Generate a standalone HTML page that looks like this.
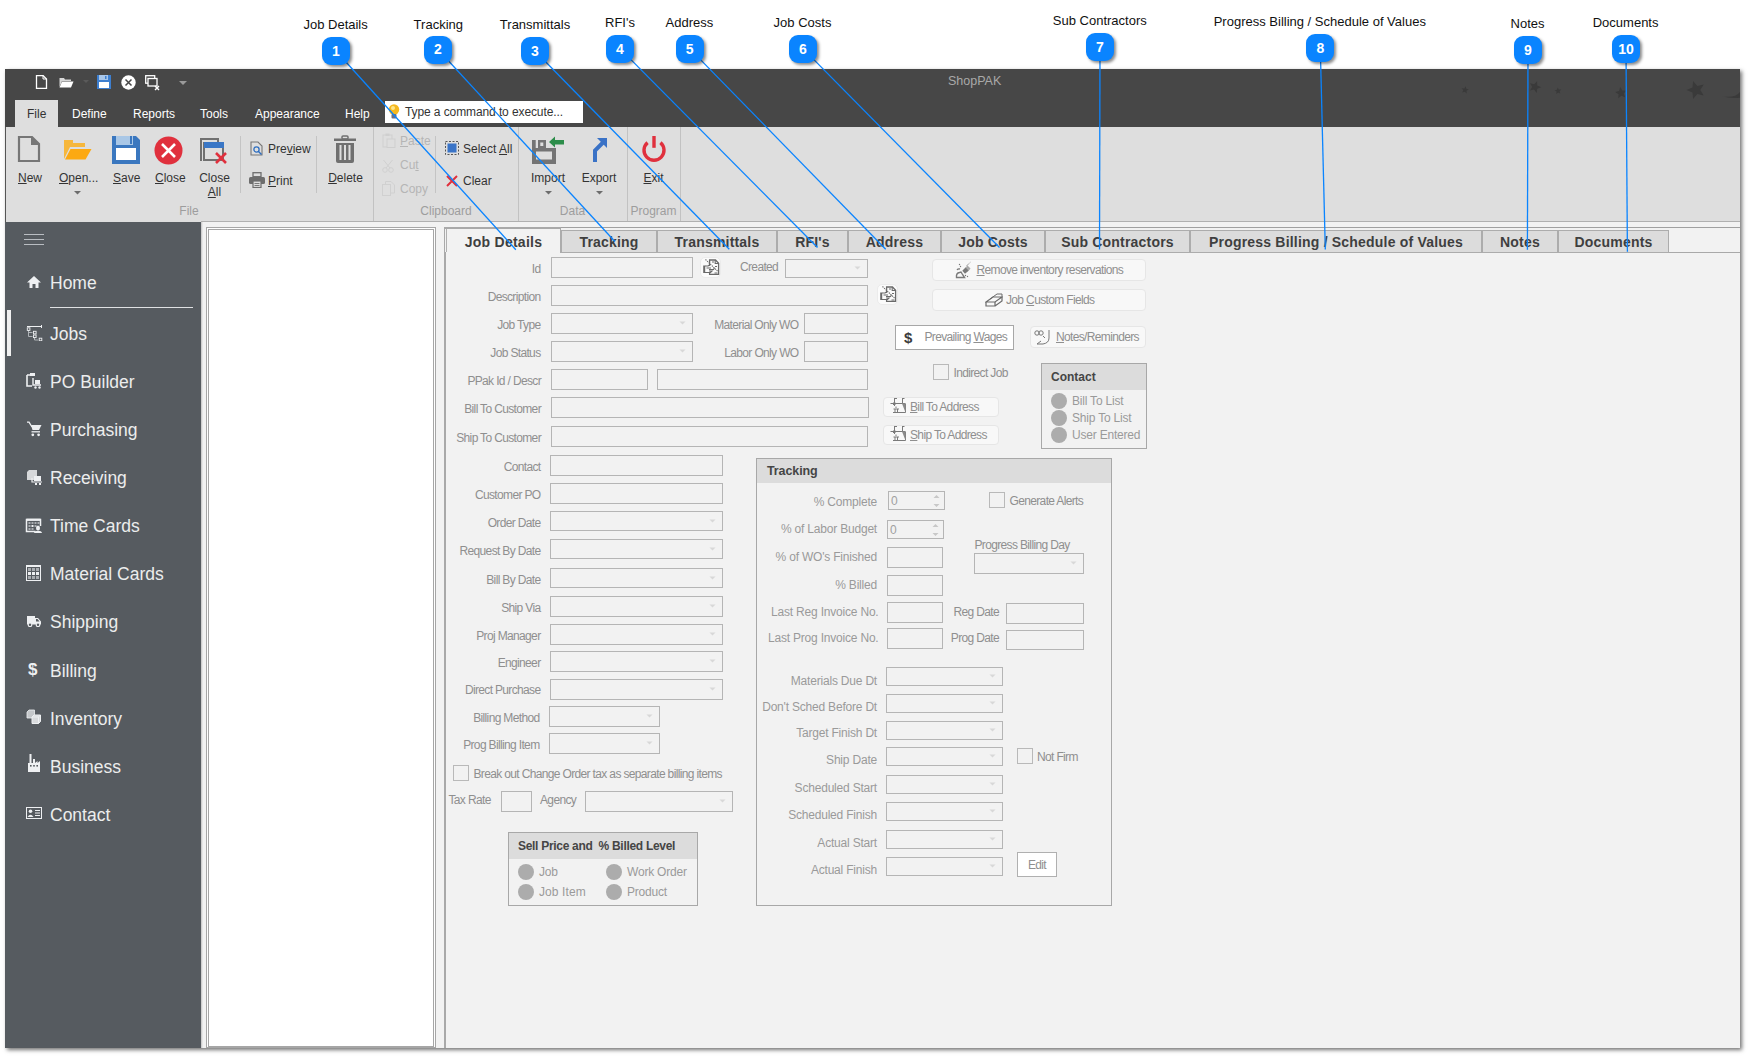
<!DOCTYPE html>
<html><head><meta charset="utf-8"><style>
html,body{margin:0;padding:0;}
body{width:1749px;height:1058px;position:relative;overflow:hidden;background:#fff;font-family:"Liberation Sans", sans-serif;}
.t{position:absolute;white-space:nowrap;}
.r{position:absolute;}
u{text-decoration:underline;text-underline-offset:1px;text-decoration-thickness:1px;}
</style></head><body>
<div class="r" style="left:5px;top:69px;width:1735px;height:979px;background:#f2f2f2;box-shadow:2px 2px 4px rgba(0,0,0,0.55);"></div><div class="r" style="left:5px;top:69px;width:1735px;height:58px;background:#474747;"></div><div class="r" style="left:5px;top:127px;width:1735px;height:95px;background:#dedede;"></div><div class="r" style="left:5px;top:127px;width:1px;height:95px;background:#555;"></div><div class="r" style="left:201px;top:221px;width:1539px;height:2px;background:#b0b0b0;"></div><div class="r" style="left:5px;top:222px;width:196px;height:826px;background:#565b60;"></div><div class="r" style="left:201px;top:222px;width:243px;height:826px;background:#f2f2f2;"></div><div class="r" style="left:206px;top:227px;width:230px;height:821px;background:#fff;border:1px solid #a6a6a6;box-sizing:border-box;"></div><div class="r" style="left:208px;top:229px;width:226px;height:818px;border:1px solid #a6a6a6;box-sizing:border-box;"></div><div class="r" style="left:201px;top:222px;width:2px;height:826px;background:linear-gradient(to right, rgba(0,0,0,0.2), rgba(0,0,0,0));"></div><div class="r" style="left:444px;top:222px;width:1296px;height:826px;background:#f2f2f2;"></div><div class="r" style="left:444px;top:227px;width:1296px;height:1px;background:#a0a0a0;"></div><div class="r" style="left:444px;top:227px;width:1px;height:821px;background:#a0a0a0;"></div><div class="t" style="left:948px;top:75.42px;font-size:12.5px;line-height:12.5px;color:#a9a9a9;font-weight:normal;">ShopPAK</div><svg class="r" style="left:1440px;top:70px;" width="300" height="40" viewBox="0 0 300 40"><polygon points="25.7,16.3 26.2,18.8 28.8,19.5 26.5,20.8 26.7,23.4 24.7,21.7 22.3,22.6 23.3,20.2 21.6,18.2 24.3,18.5" fill="#3a3a3a"/><polygon points="97.1,11.2 97.3,15.4 101.2,17.2 97.2,18.7 96.7,23.0 94.0,19.6 89.9,20.5 92.2,16.9 90.1,13.2 94.2,14.3" fill="#3a3a3a"/><polygon points="117.7,17.5 118.8,19.6 121.2,19.6 119.5,21.4 120.3,23.6 118.1,22.6 116.2,24.0 116.6,21.6 114.6,20.2 117.0,19.8" fill="#3a3a3a"/><polygon points="180.2,17.1 182.3,20.6 186.4,20.4 183.7,23.5 185.2,27.3 181.4,25.7 178.2,28.3 178.6,24.2 175.1,22.0 179.1,21.1" fill="#3a3a3a"/><polygon points="253.1,11.0 257.3,15.9 263.7,14.4 260.3,20.0 263.7,25.6 257.3,24.1 253.1,29.0 252.5,22.5 246.5,20.0 252.5,17.5" fill="#3a3a3a"/><path d="M282,26.3 Q295,28.5 300,22 V27.8 Q290,28.8 282,26.3 Z" fill="#3a3a3a"/></svg><svg class="r" style="left:35px;top:75px;" width="13" height="14" viewBox="0 0 13 14"><path d="M1.5,0.5 H8 L11.5,4 V13.5 H1.5 Z" fill="none" stroke="#fff" stroke-width="1.3"/><path d="M8,0.5 V4 H11.5" fill="none" stroke="#fff" stroke-width="1"/></svg><svg class="r" style="left:59px;top:77px;" width="15" height="11" viewBox="0 0 15 11"><path d="M0.5,1 H5 L6,2.5 H12 V4 H3 L0.5,10 Z" fill="#d8d8d8"/><path d="M3,4.5 H14.5 L12,10.5 H0.5 Z" fill="#fff"/></svg><svg class="r" style="left:83px;top:80px;" width="6" height="4" viewBox="0 0 6 4"><path d="M0,0 H6 L3,3 Z" fill="#5a5a5a"/></svg><svg class="r" style="left:97px;top:75px;" width="14" height="14" viewBox="0 0 14 14"><rect x="0" y="0" width="14" height="14" fill="#3d7fd0"/><rect x="2" y="0" width="9" height="5" fill="#a9c7ea"/><rect x="8" y="1" width="1.5" height="3" fill="#3d7fd0"/><rect x="2" y="7" width="10" height="6" fill="#fff"/></svg><svg class="r" style="left:121px;top:75px;" width="15" height="15" viewBox="0 0 15 15"><circle cx="7.5" cy="7.5" r="7.2" fill="#fff"/><path d="M4.5,4.5 L10.5,10.5 M10.5,4.5 L4.5,10.5" stroke="#474747" stroke-width="1.5"/></svg><svg class="r" style="left:145px;top:75px;" width="15" height="16" viewBox="0 0 15 16"><rect x="0.7" y="0.7" width="9" height="7.5" fill="none" stroke="#fff" stroke-width="1.3"/><rect x="3" y="3.5" width="9" height="7.5" fill="#474747" stroke="#fff" stroke-width="1.3"/><path d="M10,11 L14,15 M14,11 L10,15" stroke="#fff" stroke-width="1.4"/></svg><svg class="r" style="left:179px;top:81px;" width="8" height="5" viewBox="0 0 8 5"><path d="M0,0 H8 L4,4 Z" fill="#9a9a9a"/></svg><div class="r" style="left:15px;top:100px;width:43px;height:27px;background:#dedede;"></div><div class="t" style="left:27px;top:108.34px;font-size:12px;line-height:12px;color:#333;font-weight:normal;">File</div><div class="t" style="left:72px;top:108.34px;font-size:12px;line-height:12px;color:#fff;font-weight:normal;">Define</div><div class="t" style="left:133px;top:108.34px;font-size:12px;line-height:12px;color:#fff;font-weight:normal;">Reports</div><div class="t" style="left:200px;top:108.34px;font-size:12px;line-height:12px;color:#fff;font-weight:normal;">Tools</div><div class="t" style="left:255px;top:108.34px;font-size:12px;line-height:12px;color:#fff;font-weight:normal;">Appearance</div><div class="t" style="left:345px;top:108.34px;font-size:12px;line-height:12px;color:#fff;font-weight:normal;">Help</div><div class="r" style="left:385px;top:101px;width:198px;height:22px;background:#fff;"></div><svg class="r" style="left:388px;top:103px;" width="12" height="18" viewBox="0 0 12 18"><circle cx="6" cy="6.5" r="5.2" fill="#f5b81f"/><circle cx="5" cy="5" r="2" fill="#fde58a"/><rect x="3.5" y="11" width="5" height="4.5" rx="1" fill="#6a6f86"/></svg><div class="t" style="left:405px;top:105.84px;font-size:12px;line-height:12px;color:#333;font-weight:normal;letter-spacing:-0.1px;">Type a command to execute...</div><svg class="r" style="left:17px;top:135px;" width="24" height="28" viewBox="0 0 24 28"><path d="M2,2 H15 L22,9 V26 H2 Z" fill="none" stroke="#767676" stroke-width="2.2"/><path d="M14,1 L23,10 H14 Z" fill="#767676"/></svg><div class="t" style="left:18px;top:171.84px;font-size:12px;line-height:12px;color:#333;font-weight:normal;"><u>N</u>ew</div><svg class="r" style="left:63px;top:139px;" width="30" height="23" viewBox="0 0 30 23"><path d="M1,1 H10 V4 H22 V8 H7 L1,20 Z" fill="#f6b73c"/><path d="M7.5,10 H28.5 L22.5,20.5 H2 Z" fill="#fca912"/></svg><div class="t" style="left:59px;top:171.84px;font-size:12px;line-height:12px;color:#333;font-weight:normal;"><u>O</u>pen...</div><svg class="r" style="left:74px;top:191px;" width="7" height="4" viewBox="0 0 7 4"><path d="M0,0 H7 L3.5,3.5 Z" fill="#6d6d6d"/></svg><svg class="r" style="left:112px;top:136px;" width="28" height="28" viewBox="0 0 28 28"><path d="M0,0 H24 L28,4 V28 H0 Z" fill="#3a77bf"/><rect x="4" y="0" width="17" height="9" fill="#a9c7e6"/><rect x="18" y="0" width="2" height="8" fill="#3a77bf"/><rect x="4" y="12" width="20" height="12" fill="#fff"/></svg><div class="t" style="left:113px;top:171.84px;font-size:12px;line-height:12px;color:#333;font-weight:normal;"><u>S</u>ave</div><svg class="r" style="left:154px;top:136px;" width="29" height="29" viewBox="0 0 29 29"><circle cx="14.5" cy="14.5" r="14" fill="#e0303d"/><path d="M8,8 L21,21 M21,8 L8,21" stroke="#fff" stroke-width="2.6"/></svg><div class="t" style="left:155px;top:171.84px;font-size:12px;line-height:12px;color:#333;font-weight:normal;"><u>C</u>lose</div><svg class="r" style="left:199px;top:137px;" width="30" height="30" viewBox="0 0 30 30"><path d="M2,24 V2 H19 V6" fill="none" stroke="#707070" stroke-width="2"/><rect x="5" y="6" width="19" height="17" fill="none" stroke="#707070" stroke-width="2"/><rect x="5" y="5" width="20" height="6" fill="#3a77c6"/><path d="M17,16 L27,26 M27,16 L17,26" stroke="#e0303d" stroke-width="2.6"/></svg><div class="t" style="left:-85.5px;width:600px;text-align:center;top:171.84px;font-size:12px;line-height:12px;color:#333;font-weight:normal;">Close</div><div class="t" style="left:-85.5px;width:600px;text-align:center;top:185.84px;font-size:12px;line-height:12px;color:#333;font-weight:normal;"><u>A</u>ll</div><div class="r" style="left:240px;top:136px;width:1px;height:57px;background:#c4c4c4;"></div><svg class="r" style="left:250px;top:141px;" width="14" height="16" viewBox="0 0 14 16"><path d="M1,1 H8 L12,5 V14 H1 Z" fill="none" stroke="#777" stroke-width="1.1"/><circle cx="6.5" cy="8.5" r="2.6" fill="none" stroke="#2f6fc0" stroke-width="1.3"/><path d="M8.5,10.5 L11.5,13.5" stroke="#2f6fc0" stroke-width="1.4"/></svg><div class="t" style="left:268px;top:142.84px;font-size:12px;line-height:12px;color:#333;font-weight:normal;">Pre<u>v</u>iew</div><svg class="r" style="left:249px;top:172px;" width="16" height="16" viewBox="0 0 16 16"><rect x="4" y="0.7" width="8" height="4" fill="none" stroke="#6d6d6d" stroke-width="1.3"/><rect x="0" y="5" width="16" height="7" rx="1.5" fill="#6d6d6d"/><rect x="4" y="9" width="8" height="6.5" fill="#dedede" stroke="#6d6d6d" stroke-width="1.2"/><path d="M5.5,11.5 H10.5 M5.5,13.5 H10.5" stroke="#6d6d6d" stroke-width="0.9"/></svg><div class="t" style="left:268px;top:174.84px;font-size:12px;line-height:12px;color:#333;font-weight:normal;"><u>P</u>rint</div><div class="r" style="left:316px;top:136px;width:1px;height:57px;background:#c4c4c4;"></div><svg class="r" style="left:333px;top:135px;" width="24" height="30" viewBox="0 0 24 30"><rect x="9" y="1" width="6" height="3" rx="1" fill="none" stroke="#707070" stroke-width="1.5"/><rect x="1" y="3.5" width="22" height="2.5" fill="#707070"/><path d="M3,8 H21 V26 Q21,28 19,28 H5 Q3,28 3,26 Z" fill="#707070"/><rect x="6.5" y="10" width="2" height="15" fill="#dedede"/><rect x="11" y="10" width="2" height="15" fill="#dedede"/><rect x="15.5" y="10" width="2" height="15" fill="#dedede"/></svg><div class="t" style="left:45.5px;width:600px;text-align:center;top:171.84px;font-size:12px;line-height:12px;color:#333;font-weight:normal;"><u>D</u>elete</div><div class="t" style="left:-111px;width:600px;text-align:center;top:204.84px;font-size:12px;line-height:12px;color:#9d9d9d;font-weight:normal;">File</div><div class="r" style="left:373px;top:127px;width:1px;height:94px;background:#c2c2c2;"></div><svg class="r" style="left:382px;top:133px;" width="14" height="15" viewBox="0 0 14 15"><rect x="1" y="2" width="9" height="12" fill="none" stroke="#cfcfcf" stroke-width="1"/><rect x="5" y="6" width="8" height="8.5" fill="#dedede" stroke="#cfcfcf" stroke-width="1"/><rect x="3.5" y="0.5" width="4" height="2.5" fill="#cfcfcf"/></svg><div class="t" style="left:400px;top:135.34px;font-size:12px;line-height:12px;color:#b5b5b5;font-weight:normal;"><u>P</u>aste</div><svg class="r" style="left:382px;top:159px;" width="12" height="14" viewBox="0 0 12 14"><circle cx="3" cy="11" r="2.3" fill="none" stroke="#d0d0d0" stroke-width="1"/><circle cx="9" cy="11" r="2.3" fill="none" stroke="#d0d0d0" stroke-width="1"/><path d="M1.5,1 L8,9 M10.5,1 L4,9" stroke="#d0d0d0" stroke-width="1"/></svg><div class="t" style="left:400px;top:159.34px;font-size:12px;line-height:12px;color:#b5b5b5;font-weight:normal;">Cu<u>t</u></div><svg class="r" style="left:382px;top:181px;" width="13" height="15" viewBox="0 0 13 15"><rect x="0.5" y="3.5" width="8" height="11" fill="none" stroke="#d0d0d0" stroke-width="1"/><path d="M3.5,3.5 V0.5 H9 L12.5,4 V12 H8.5" fill="none" stroke="#d0d0d0" stroke-width="1"/></svg><div class="t" style="left:400px;top:183.34px;font-size:12px;line-height:12px;color:#b5b5b5;font-weight:normal;">Copy</div><div class="r" style="left:435px;top:136px;width:1px;height:57px;background:#c4c4c4;"></div><svg class="r" style="left:445px;top:141px;" width="14" height="14" viewBox="0 0 14 14"><rect x="0.5" y="0.5" width="13" height="13" fill="none" stroke="#555" stroke-width="1" stroke-dasharray="2,1.5"/><rect x="2.5" y="2.5" width="9" height="9" fill="#3a74c7"/></svg><div class="t" style="left:463px;top:142.84px;font-size:12px;line-height:12px;color:#333;font-weight:normal;">Select <u>A</u>ll</div><svg class="r" style="left:446px;top:175px;" width="12" height="12" viewBox="0 0 12 12"><path d="M1,1 L11,11 M11,1 L1,11" stroke="#e0303d" stroke-width="2"/></svg><div class="t" style="left:463px;top:174.84px;font-size:12px;line-height:12px;color:#333;font-weight:normal;">Clear</div><div class="t" style="left:146px;width:600px;text-align:center;top:205.34px;font-size:12px;line-height:12px;color:#9d9d9d;font-weight:normal;">Clipboard</div><div class="r" style="left:518px;top:127px;width:1px;height:94px;background:#c2c2c2;"></div><svg class="r" style="left:531px;top:136px;" width="35" height="29" viewBox="0 0 35 29"><rect x="1" y="4" width="3.7" height="24" fill="#747474"/><rect x="7" y="4" width="8" height="8" fill="#747474"/><path d="M1,12 H25 V28 H1 Z M5,15.5 V23.5 H21 V15.5 Z" fill="#747474" fill-rule="evenodd"/><rect x="9.3" y="6.5" width="3" height="3.5" fill="#dedede"/><path d="M18,6 L24,0.5 V4 H33 V8.5 H24 V11.5 Z" fill="#2c8d4a"/></svg><div class="t" style="left:248px;width:600px;text-align:center;top:171.84px;font-size:12px;line-height:12px;color:#333;font-weight:normal;">Import</div><svg class="r" style="left:545px;top:191px;" width="7" height="4" viewBox="0 0 7 4"><path d="M0,0 H7 L3.5,3.5 Z" fill="#6d6d6d"/></svg><svg class="r" style="left:592px;top:137px;" width="16" height="26" viewBox="0 0 16 26"><path d="M3,25 V13.5 L11,5.5" fill="none" stroke="#3a72c6" stroke-width="4" stroke-linejoin="miter"/><path d="M5,1 H15 V11 Z" fill="#3a72c6"/></svg><div class="t" style="left:299px;width:600px;text-align:center;top:171.84px;font-size:12px;line-height:12px;color:#333;font-weight:normal;">Export</div><svg class="r" style="left:596px;top:191px;" width="7" height="4" viewBox="0 0 7 4"><path d="M0,0 H7 L3.5,3.5 Z" fill="#6d6d6d"/></svg><div class="t" style="left:272.5px;width:600px;text-align:center;top:205.34px;font-size:12px;line-height:12px;color:#9d9d9d;font-weight:normal;">Data</div><div class="r" style="left:627px;top:127px;width:1px;height:94px;background:#c2c2c2;"></div><svg class="r" style="left:641px;top:136px;" width="26" height="28" viewBox="0 0 26 28"><path d="M6.57,6.64 A10,10 0 1 0 19.43,6.64" fill="none" stroke="#e0303d" stroke-width="3.4"/><rect x="11.3" y="0" width="3.4" height="11.8" fill="#e0303d"/></svg><div class="t" style="left:353.5px;width:600px;text-align:center;top:171.84px;font-size:12px;line-height:12px;color:#333;font-weight:normal;"><u>E</u>xit</div><div class="t" style="left:353.5px;width:600px;text-align:center;top:205.34px;font-size:12px;line-height:12px;color:#9d9d9d;font-weight:normal;">Program</div><div class="r" style="left:680px;top:127px;width:1px;height:94px;background:#c2c2c2;"></div><div class="r" style="left:24px;top:234px;width:20px;height:1px;background:#b9bdc2;"></div><div class="r" style="left:24px;top:239px;width:20px;height:1px;background:#b9bdc2;"></div><div class="r" style="left:24px;top:244px;width:20px;height:1px;background:#b9bdc2;"></div><div class="t" style="left:50px;top:274.89px;font-size:17.5px;line-height:17.5px;color:#eceded;font-weight:normal;">Home</div><div class="t" style="left:50px;top:325.89px;font-size:17.5px;line-height:17.5px;color:#eceded;font-weight:normal;">Jobs</div><div class="t" style="left:50px;top:373.89px;font-size:17.5px;line-height:17.5px;color:#eceded;font-weight:normal;">PO Builder</div><div class="t" style="left:50px;top:421.89px;font-size:17.5px;line-height:17.5px;color:#eceded;font-weight:normal;">Purchasing</div><div class="t" style="left:50px;top:469.89px;font-size:17.5px;line-height:17.5px;color:#eceded;font-weight:normal;">Receiving</div><div class="t" style="left:50px;top:517.89px;font-size:17.5px;line-height:17.5px;color:#eceded;font-weight:normal;">Time Cards</div><div class="t" style="left:50px;top:565.89px;font-size:17.5px;line-height:17.5px;color:#eceded;font-weight:normal;">Material Cards</div><div class="t" style="left:50px;top:613.89px;font-size:17.5px;line-height:17.5px;color:#eceded;font-weight:normal;">Shipping</div><div class="t" style="left:50px;top:662.89px;font-size:17.5px;line-height:17.5px;color:#eceded;font-weight:normal;">Billing</div><div class="t" style="left:50px;top:710.89px;font-size:17.5px;line-height:17.5px;color:#eceded;font-weight:normal;">Inventory</div><div class="t" style="left:50px;top:758.89px;font-size:17.5px;line-height:17.5px;color:#eceded;font-weight:normal;">Business</div><div class="t" style="left:50px;top:806.89px;font-size:17.5px;line-height:17.5px;color:#eceded;font-weight:normal;">Contact</div><div class="r" style="left:50px;top:307px;width:143px;height:1px;background:#dfe1e3;"></div><div class="r" style="left:7px;top:310px;width:4px;height:46px;background:#f0f0f0;"></div><svg class="r" style="left:27px;top:276px;" width="14" height="12" viewBox="0 0 14 12"><path d="M7,0 L14,6.5 H11.5 V12 H8.5 V8 H5.5 V12 H2.5 V6.5 H0 Z" fill="#eef0f2"/></svg><svg class="r" style="left:26px;top:324px;" width="17" height="17" viewBox="0 0 17 17"><path d="M1,2.5 H15.5 M15.5,1 V4" stroke="#eef0f2" stroke-width="1" fill="none"/><path d="M2.5,6 V12.5 H6.5 M2.5,8.5 H6.5 M8.5,13.5 V16 H12" stroke="#b8bcc0" stroke-width="0.9" fill="none"/><rect x="1.3" y="3.8" width="2.6" height="2.6" fill="none" stroke="#eef0f2" stroke-width="0.9"/><rect x="7.5" y="7.3" width="2.6" height="2.6" fill="none" stroke="#eef0f2" stroke-width="0.9"/><rect x="7.5" y="11" width="2.6" height="2.6" fill="none" stroke="#eef0f2" stroke-width="0.9"/><rect x="13.2" y="14.2" width="2.6" height="2.6" fill="none" stroke="#eef0f2" stroke-width="0.9"/></svg><svg class="r" style="left:26px;top:373px;" width="16" height="16" viewBox="0 0 16 16"><path d="M1,2 H4 M1,2 V13 H6" stroke="#eef0f2" stroke-width="1.6" fill="none"/><rect x="4" y="0" width="5" height="3" fill="#eef0f2"/><path d="M7,5 V12 H15" stroke="#eef0f2" stroke-width="1.4" fill="none"/><rect x="9" y="7" width="5" height="4" fill="#eef0f2"/><circle cx="9.5" cy="14.5" r="1.2" fill="#eef0f2"/><circle cx="13.5" cy="14.5" r="1.2" fill="#eef0f2"/></svg><svg class="r" style="left:26px;top:421px;" width="16" height="16" viewBox="0 0 16 16"><path d="M1,1.2 H3 L6,6" stroke="#eef0f2" stroke-width="1.3" fill="none"/><path d="M5,4 H15.5 L13,9 H6.5 Z" fill="#eef0f2"/><path d="M5.5,10.8 H14" stroke="#eef0f2" stroke-width="1.3"/><circle cx="6.8" cy="13.8" r="1.4" fill="#eef0f2"/><circle cx="12.6" cy="13.8" r="1.4" fill="#eef0f2"/></svg><svg class="r" style="left:26px;top:469px;" width="17" height="17" viewBox="0 0 17 17"><path d="M1,3 L3,1 H11 V9 L9,11 H1 Z" fill="#d6d8da"/><path d="M6,9 V13 H16" stroke="#eef0f2" stroke-width="1.2" fill="none"/><rect x="8" y="7" width="7" height="5" fill="#eef0f2"/><rect x="9" y="14" width="2" height="2" fill="#eef0f2"/><rect x="13" y="14" width="2" height="2" fill="#eef0f2"/></svg><svg class="r" style="left:25px;top:518px;" width="18" height="17" viewBox="0 0 18 17"><path d="M10.5,13.5 H1.5 V1.5 H15.5 V8" fill="none" stroke="#eef0f2" stroke-width="1.5"/><path d="M1.5,1.8 H15.5" stroke="#eef0f2" stroke-width="2.2"/><g fill="#a9adb1"><rect x="3.5" y="4" width="2" height="2"/><rect x="6.5" y="4" width="2" height="2"/><rect x="9.5" y="4" width="2" height="2"/><rect x="12.5" y="4" width="2" height="2"/><rect x="3.5" y="7" width="2" height="2"/><rect x="9.5" y="7" width="2" height="2"/><rect x="3.5" y="10" width="2" height="2"/><rect x="6.5" y="10" width="2" height="2"/></g><rect x="6.5" y="7" width="2" height="2" fill="#eef0f2"/><ellipse cx="13" cy="10" rx="2" ry="2.5" fill="#eef0f2"/><path d="M9,15 Q9.5,12.8 13,12.8 Q16.5,12.8 17,15 Z" fill="#eef0f2"/></svg><svg class="r" style="left:25px;top:565px;" width="17" height="17" viewBox="0 0 17 17"><rect x="1.5" y="0.5" width="14" height="15" fill="none" stroke="#eef0f2" stroke-width="1"/><path d="M1.5,1.5 H15.5" stroke="#eef0f2" stroke-width="1"/><g fill="#a9adb1"><rect x="3" y="3" width="3" height="3"/><rect x="7" y="3" width="3" height="3"/><rect x="11" y="3" width="3" height="3"/><rect x="3" y="11" width="3" height="3"/><rect x="7" y="11" width="3" height="3"/><rect x="11" y="11" width="3" height="3"/></g><g fill="#eef0f2"><rect x="3" y="7" width="3" height="3"/><rect x="7" y="7" width="3" height="3"/><rect x="11" y="7" width="3" height="3"/></g></svg><svg class="r" style="left:26px;top:615px;" width="16" height="12" viewBox="0 0 16 12"><path d="M1,1 H9 V3 H12 L15,6.5 V9.5 H1 Z" fill="#eef0f2"/><path d="M10,4 H11.5 L13.5,6.5 H10 Z" fill="#565b60"/><circle cx="4" cy="9.8" r="1.8" fill="#565b60" stroke="#eef0f2" stroke-width="1.1"/><circle cx="12" cy="9.8" r="1.8" fill="#565b60" stroke="#eef0f2" stroke-width="1.1"/></svg><div class="t" style="left:28px;top:660.61px;font-size:17px;line-height:17px;color:#eef0f2;font-weight:bold;">$</div><svg class="r" style="left:26px;top:709px;" width="16" height="16" viewBox="0 0 16 16"><path d="M1,3 L3,1 H8.5 V7 L6.5,9 H1 Z" fill="#c4c7ca" stroke="#eef0f2" stroke-width="0.8"/><path d="M6,8 L8,6 H14.5 V12.5 L12.5,14.5 H6 Z" fill="#d9dbdd" stroke="#eef0f2" stroke-width="1"/><path d="M6,8 H12.5 V14.5 M12.5,8 L14.5,6" fill="none" stroke="#eef0f2" stroke-width="1"/></svg><svg class="r" style="left:27px;top:753px;" width="14" height="19" viewBox="0 0 14 19"><path d="M1,19 V10 H2.5 V1 H4.5 V10 H6 V6 H8 V10 L10.5,8 V10 L13,8 V19 Z" fill="#eef0f2"/><rect x="3" y="12" width="1.6" height="1.6" fill="#565b60"/><rect x="6.2" y="12" width="1.6" height="1.6" fill="#565b60"/><rect x="9.4" y="12" width="1.6" height="1.6" fill="#565b60"/></svg><svg class="r" style="left:26px;top:807px;" width="16" height="12" viewBox="0 0 16 12"><rect x="0.5" y="0.5" width="15" height="11" fill="none" stroke="#eef0f2"/><circle cx="4.5" cy="4.2" r="1.8" fill="#eef0f2"/><path d="M1.5,10 Q4.5,5.5 7.5,10 Z" fill="#eef0f2"/><path d="M9,3.5 H14 M9,6 H14 M9,8.5 H14" stroke="#eef0f2"/></svg><div class="r" style="left:561px;top:252px;width:1179px;height:1px;background:#a9a9a9;"></div><div class="r" style="left:561px;top:230px;width:96px;height:23px;background:#dcdcdc;border:1px solid #acacac;box-sizing:border-box;"></div><div class="r" style="left:657px;top:230px;width:120px;height:23px;background:#dcdcdc;border:1px solid #acacac;box-sizing:border-box;"></div><div class="r" style="left:777px;top:230px;width:71px;height:23px;background:#dcdcdc;border:1px solid #acacac;box-sizing:border-box;"></div><div class="r" style="left:848px;top:230px;width:93px;height:23px;background:#dcdcdc;border:1px solid #acacac;box-sizing:border-box;"></div><div class="r" style="left:941px;top:230px;width:104px;height:23px;background:#dcdcdc;border:1px solid #acacac;box-sizing:border-box;"></div><div class="r" style="left:1045px;top:230px;width:145px;height:23px;background:#dcdcdc;border:1px solid #acacac;box-sizing:border-box;"></div><div class="r" style="left:1190px;top:230px;width:292px;height:23px;background:#dcdcdc;border:1px solid #acacac;box-sizing:border-box;"></div><div class="r" style="left:1482px;top:230px;width:76px;height:23px;background:#dcdcdc;border:1px solid #acacac;box-sizing:border-box;"></div><div class="r" style="left:1558px;top:230px;width:111px;height:23px;background:#dcdcdc;border:1px solid #acacac;box-sizing:border-box;"></div><div class="r" style="left:444px;top:227px;width:117px;height:26px;background:#f2f2f2;"></div><div class="r" style="left:444px;top:227px;width:117px;height:2px;background:#a9a9a9;"></div><div class="r" style="left:444px;top:227px;width:1px;height:821px;background:#a9a9a9;"></div><div class="r" style="left:446px;top:229px;width:1px;height:23px;background:#b0b0b0;"></div><div class="r" style="left:445px;top:252px;width:1px;height:796px;background:#a9a9a9;"></div><div class="r" style="left:560px;top:229px;width:1px;height:24px;background:#acacac;"></div><div class="t" style="left:203.5px;width:600px;text-align:center;top:234.65px;font-size:14px;line-height:14px;color:#3f3f3f;font-weight:bold;letter-spacing:0.25px;">Job Details</div><div class="t" style="left:309.0px;width:600px;text-align:center;top:235.15px;font-size:14px;line-height:14px;color:#3f3f3f;font-weight:bold;letter-spacing:0.2px;">Tracking</div><div class="t" style="left:417.0px;width:600px;text-align:center;top:235.15px;font-size:14px;line-height:14px;color:#3f3f3f;font-weight:bold;letter-spacing:0.2px;">Transmittals</div><div class="t" style="left:512.5px;width:600px;text-align:center;top:235.15px;font-size:14px;line-height:14px;color:#3f3f3f;font-weight:bold;letter-spacing:0.2px;">RFI's</div><div class="t" style="left:594.5px;width:600px;text-align:center;top:235.15px;font-size:14px;line-height:14px;color:#3f3f3f;font-weight:bold;letter-spacing:0.2px;">Address</div><div class="t" style="left:693.0px;width:600px;text-align:center;top:235.15px;font-size:14px;line-height:14px;color:#3f3f3f;font-weight:bold;letter-spacing:0.2px;">Job Costs</div><div class="t" style="left:817.5px;width:600px;text-align:center;top:235.15px;font-size:14px;line-height:14px;color:#3f3f3f;font-weight:bold;letter-spacing:0.2px;">Sub Contractors</div><div class="t" style="left:1036.0px;width:600px;text-align:center;top:235.15px;font-size:14px;line-height:14px;color:#3f3f3f;font-weight:bold;letter-spacing:0.2px;">Progress Billing / Schedule of Values</div><div class="t" style="left:1220.0px;width:600px;text-align:center;top:235.15px;font-size:14px;line-height:14px;color:#3f3f3f;font-weight:bold;letter-spacing:0.2px;">Notes</div><div class="t" style="left:1313.5px;width:600px;text-align:center;top:235.15px;font-size:14px;line-height:14px;color:#3f3f3f;font-weight:bold;letter-spacing:0.2px;">Documents</div><div class="t" style="left:-59.5px;width:600px;text-align:right;top:262.84px;font-size:12px;line-height:12px;color:#8f8f8f;font-weight:normal;letter-spacing:-0.65px;">Id</div><div class="r" style="left:551px;top:257px;width:142px;height:21px;background:#f2f2f2;border:1px solid #b5b5b5;box-sizing:border-box;"></div><div class="t" style="left:-59.5px;width:600px;text-align:right;top:291.34px;font-size:12px;line-height:12px;color:#8f8f8f;font-weight:normal;letter-spacing:-0.65px;">Description</div><div class="r" style="left:551px;top:285px;width:317px;height:21px;background:#f2f2f2;border:1px solid #b5b5b5;box-sizing:border-box;"></div><div class="t" style="left:-59.5px;width:600px;text-align:right;top:319.34px;font-size:12px;line-height:12px;color:#8f8f8f;font-weight:normal;letter-spacing:-0.65px;">Job Type</div><div class="r" style="left:551px;top:313px;width:142px;height:21px;background:#f2f2f2;border:1px solid #b5b5b5;box-sizing:border-box;"></div><svg class="r" style="left:679px;top:321px;" width="7" height="4" viewBox="0 0 7 4"><path d="M0.5,0.5 H6.5 L3.5,3.5 Z" fill="#d8d8d8"/></svg><div class="t" style="left:-59.5px;width:600px;text-align:right;top:347.34px;font-size:12px;line-height:12px;color:#8f8f8f;font-weight:normal;letter-spacing:-0.65px;">Job Status</div><div class="r" style="left:551px;top:341px;width:142px;height:21px;background:#f2f2f2;border:1px solid #b5b5b5;box-sizing:border-box;"></div><svg class="r" style="left:679px;top:349px;" width="7" height="4" viewBox="0 0 7 4"><path d="M0.5,0.5 H6.5 L3.5,3.5 Z" fill="#d8d8d8"/></svg><div class="t" style="left:-59.0px;width:600px;text-align:right;top:375.34px;font-size:12px;line-height:12px;color:#8f8f8f;font-weight:normal;letter-spacing:-0.65px;">PPak Id / Descr</div><div class="r" style="left:551px;top:369px;width:97px;height:21px;background:#f2f2f2;border:1px solid #b5b5b5;box-sizing:border-box;"></div><div class="r" style="left:657px;top:369px;width:211px;height:21px;background:#f2f2f2;border:1px solid #b5b5b5;box-sizing:border-box;"></div><div class="t" style="left:-59.0px;width:600px;text-align:right;top:403.34px;font-size:12px;line-height:12px;color:#8f8f8f;font-weight:normal;letter-spacing:-0.65px;">Bill To Customer</div><div class="r" style="left:551px;top:397px;width:318px;height:21px;background:#f2f2f2;border:1px solid #b5b5b5;box-sizing:border-box;"></div><div class="t" style="left:-59.0px;width:600px;text-align:right;top:432.34px;font-size:12px;line-height:12px;color:#8f8f8f;font-weight:normal;letter-spacing:-0.65px;">Ship To Customer</div><div class="r" style="left:551px;top:426px;width:317px;height:21px;background:#f2f2f2;border:1px solid #b5b5b5;box-sizing:border-box;"></div><div class="t" style="left:-59.5px;width:600px;text-align:right;top:460.84px;font-size:12px;line-height:12px;color:#8f8f8f;font-weight:normal;letter-spacing:-0.65px;">Contact</div><div class="r" style="left:550px;top:455px;width:173px;height:21px;background:#f2f2f2;border:1px solid #b5b5b5;box-sizing:border-box;"></div><div class="t" style="left:-59.5px;width:600px;text-align:right;top:488.84px;font-size:12px;line-height:12px;color:#8f8f8f;font-weight:normal;letter-spacing:-0.65px;">Customer PO</div><div class="r" style="left:550px;top:483px;width:173px;height:21px;background:#f2f2f2;border:1px solid #b5b5b5;box-sizing:border-box;"></div><div class="t" style="left:-59.5px;width:600px;text-align:right;top:516.84px;font-size:12px;line-height:12px;color:#8f8f8f;font-weight:normal;letter-spacing:-0.65px;">Order Date</div><div class="r" style="left:550px;top:511px;width:173px;height:20px;background:#f2f2f2;border:1px solid #b5b5b5;box-sizing:border-box;"></div><svg class="r" style="left:709px;top:519px;" width="7" height="4" viewBox="0 0 7 4"><path d="M0.5,0.5 H6.5 L3.5,3.5 Z" fill="#d8d8d8"/></svg><div class="t" style="left:-59.5px;width:600px;text-align:right;top:544.84px;font-size:12px;line-height:12px;color:#8f8f8f;font-weight:normal;letter-spacing:-0.65px;">Request By Date</div><div class="r" style="left:550px;top:539px;width:173px;height:20px;background:#f2f2f2;border:1px solid #b5b5b5;box-sizing:border-box;"></div><svg class="r" style="left:709px;top:547px;" width="7" height="4" viewBox="0 0 7 4"><path d="M0.5,0.5 H6.5 L3.5,3.5 Z" fill="#d8d8d8"/></svg><div class="t" style="left:-59.5px;width:600px;text-align:right;top:573.84px;font-size:12px;line-height:12px;color:#8f8f8f;font-weight:normal;letter-spacing:-0.65px;">Bill By Date</div><div class="r" style="left:550px;top:568px;width:173px;height:20px;background:#f2f2f2;border:1px solid #b5b5b5;box-sizing:border-box;"></div><svg class="r" style="left:709px;top:576px;" width="7" height="4" viewBox="0 0 7 4"><path d="M0.5,0.5 H6.5 L3.5,3.5 Z" fill="#d8d8d8"/></svg><div class="t" style="left:-59.5px;width:600px;text-align:right;top:601.84px;font-size:12px;line-height:12px;color:#8f8f8f;font-weight:normal;letter-spacing:-0.65px;">Ship Via</div><div class="r" style="left:550px;top:596px;width:173px;height:21px;background:#f2f2f2;border:1px solid #b5b5b5;box-sizing:border-box;"></div><svg class="r" style="left:709px;top:604px;" width="7" height="4" viewBox="0 0 7 4"><path d="M0.5,0.5 H6.5 L3.5,3.5 Z" fill="#d8d8d8"/></svg><div class="t" style="left:-59.5px;width:600px;text-align:right;top:629.84px;font-size:12px;line-height:12px;color:#8f8f8f;font-weight:normal;letter-spacing:-0.65px;">Proj Manager</div><div class="r" style="left:550px;top:624px;width:173px;height:21px;background:#f2f2f2;border:1px solid #b5b5b5;box-sizing:border-box;"></div><svg class="r" style="left:709px;top:632px;" width="7" height="4" viewBox="0 0 7 4"><path d="M0.5,0.5 H6.5 L3.5,3.5 Z" fill="#d8d8d8"/></svg><div class="t" style="left:-59.5px;width:600px;text-align:right;top:656.84px;font-size:12px;line-height:12px;color:#8f8f8f;font-weight:normal;letter-spacing:-0.65px;">Engineer</div><div class="r" style="left:550px;top:651px;width:173px;height:21px;background:#f2f2f2;border:1px solid #b5b5b5;box-sizing:border-box;"></div><svg class="r" style="left:709px;top:659px;" width="7" height="4" viewBox="0 0 7 4"><path d="M0.5,0.5 H6.5 L3.5,3.5 Z" fill="#d8d8d8"/></svg><div class="t" style="left:-59.5px;width:600px;text-align:right;top:683.84px;font-size:12px;line-height:12px;color:#8f8f8f;font-weight:normal;letter-spacing:-0.65px;">Direct Purchase</div><div class="r" style="left:550px;top:679px;width:173px;height:21px;background:#f2f2f2;border:1px solid #b5b5b5;box-sizing:border-box;"></div><svg class="r" style="left:709px;top:687px;" width="7" height="4" viewBox="0 0 7 4"><path d="M0.5,0.5 H6.5 L3.5,3.5 Z" fill="#d8d8d8"/></svg><div class="t" style="left:-60.5px;width:600px;text-align:right;top:711.84px;font-size:12px;line-height:12px;color:#8f8f8f;font-weight:normal;letter-spacing:-0.65px;">Billing Method</div><div class="r" style="left:549px;top:706px;width:111px;height:21px;background:#f2f2f2;border:1px solid #b5b5b5;box-sizing:border-box;"></div><svg class="r" style="left:646px;top:714px;" width="7" height="4" viewBox="0 0 7 4"><path d="M0.5,0.5 H6.5 L3.5,3.5 Z" fill="#d8d8d8"/></svg><div class="t" style="left:-60.5px;width:600px;text-align:right;top:738.84px;font-size:12px;line-height:12px;color:#8f8f8f;font-weight:normal;letter-spacing:-0.65px;">Prog Billing Item</div><div class="r" style="left:549px;top:733px;width:111px;height:21px;background:#f2f2f2;border:1px solid #b5b5b5;box-sizing:border-box;"></div><svg class="r" style="left:646px;top:741px;" width="7" height="4" viewBox="0 0 7 4"><path d="M0.5,0.5 H6.5 L3.5,3.5 Z" fill="#d8d8d8"/></svg><div class="r" style="left:453px;top:765px;width:16px;height:16px;background:#f2f2f2;border:1px solid #b9b9b9;box-sizing:border-box;"></div><div class="t" style="left:473.5px;top:767.84px;font-size:12px;line-height:12px;color:#8f8f8f;font-weight:normal;letter-spacing:-0.65px;">Break out Change Order tax as separate billing items</div><div class="t" style="left:448.5px;top:793.84px;font-size:12px;line-height:12px;color:#8f8f8f;font-weight:normal;letter-spacing:-0.65px;">Tax Rate</div><div class="r" style="left:501px;top:791px;width:31px;height:21px;background:#f2f2f2;border:1px solid #b5b5b5;box-sizing:border-box;"></div><div class="t" style="left:540px;top:793.84px;font-size:12px;line-height:12px;color:#8f8f8f;font-weight:normal;letter-spacing:-0.65px;">Agency</div><div class="r" style="left:585px;top:791px;width:148px;height:21px;background:#f2f2f2;border:1px solid #b5b5b5;box-sizing:border-box;"></div><svg class="r" style="left:719px;top:799px;" width="7" height="4" viewBox="0 0 7 4"><path d="M0.5,0.5 H6.5 L3.5,3.5 Z" fill="#d8d8d8"/></svg><div class="r" style="left:508px;top:832px;width:190px;height:74px;background:#f2f2f2;border:1px solid #a8a8a8;box-sizing:border-box;"></div><div class="r" style="left:509px;top:833px;width:188px;height:26px;background:#dcdcdc;"></div><div class="t" style="left:518px;top:839.84px;font-size:12px;line-height:12px;color:#454545;font-weight:bold;letter-spacing:-0.3px;">Sell Price and&nbsp; % Billed Level</div><div class="r" style="left:518px;top:864px;width:16px;height:16px;border-radius:50%;background:#acacac;"></div><div class="t" style="left:539px;top:865.84px;font-size:12px;line-height:12px;color:#9a9a9a;font-weight:normal;letter-spacing:-0.2px;">Job</div><div class="r" style="left:518px;top:884px;width:16px;height:16px;border-radius:50%;background:#acacac;"></div><div class="t" style="left:539px;top:885.84px;font-size:12px;line-height:12px;color:#9a9a9a;font-weight:normal;letter-spacing:0.1px;">Job Item</div><div class="r" style="left:606px;top:864px;width:16px;height:16px;border-radius:50%;background:#acacac;"></div><div class="t" style="left:627px;top:865.84px;font-size:12px;line-height:12px;color:#9a9a9a;font-weight:normal;letter-spacing:-0.2px;">Work Order</div><div class="r" style="left:606px;top:884px;width:16px;height:16px;border-radius:50%;background:#acacac;"></div><div class="t" style="left:627px;top:885.84px;font-size:12px;line-height:12px;color:#9a9a9a;font-weight:normal;letter-spacing:-0.2px;">Product</div><div class="r" style="left:700px;top:257px;width:21px;height:21px;background:#fbfbfb;border:1px solid #ebebeb;box-sizing:border-box;border-radius:5px;"></div><svg class="r" style="left:700px;top:257px;" width="21" height="21" viewBox="0 0 21 21"><path d="M9.6,9 V3 H15.5 L18.6,6.2 V17.4 H9.6 V15.5" fill="none" stroke="#6a6a6a" stroke-width="1.3"/><path d="M15.2,3 V6.5 H18.6" fill="none" stroke="#6a6a6a" stroke-width="1.1"/><rect x="3.2" y="8.5" width="2" height="7.5" fill="#6a6a6a"/><path d="M5,9 H8 L9.5,8 M5,15.5 H10.5 L12,14 H9 M9,12.5 H13.5 L14.5,11 M6.5,11 H11" fill="none" stroke="#6a6a6a" stroke-width="1.2"/><path d="M5.5,2.5 L17.5,14" stroke="#6a6a6a" stroke-width="1.1" stroke-dasharray="1.3,0.9"/><path d="M12,5 H14 M15,9.5 H17 M14.5,16 H17.5" stroke="#6a6a6a" stroke-width="1"/></svg><div class="r" style="left:877px;top:284px;width:21px;height:21px;background:#fbfbfb;border:1px solid #ebebeb;box-sizing:border-box;border-radius:5px;"></div><svg class="r" style="left:877px;top:284px;" width="21" height="21" viewBox="0 0 21 21"><path d="M9.6,9 V3 H15.5 L18.6,6.2 V17.4 H9.6 V15.5" fill="none" stroke="#6a6a6a" stroke-width="1.3"/><path d="M15.2,3 V6.5 H18.6" fill="none" stroke="#6a6a6a" stroke-width="1.1"/><rect x="3.2" y="8.5" width="2" height="7.5" fill="#6a6a6a"/><path d="M5,9 H8 L9.5,8 M5,15.5 H10.5 L12,14 H9 M9,12.5 H13.5 L14.5,11 M6.5,11 H11" fill="none" stroke="#6a6a6a" stroke-width="1.2"/><path d="M5.5,2.5 L17.5,14" stroke="#6a6a6a" stroke-width="1.1" stroke-dasharray="1.3,0.9"/><path d="M12,5 H14 M15,9.5 H17 M14.5,16 H17.5" stroke="#6a6a6a" stroke-width="1"/></svg><div class="t" style="left:740px;top:261.34px;font-size:12px;line-height:12px;color:#8f8f8f;font-weight:normal;letter-spacing:-0.65px;">Created</div><div class="r" style="left:785px;top:259px;width:83px;height:19px;background:#f2f2f2;border:1px solid #b5b5b5;box-sizing:border-box;"></div><svg class="r" style="left:854px;top:266px;" width="7" height="4" viewBox="0 0 7 4"><path d="M0.5,0.5 H6.5 L3.5,3.5 Z" fill="#d8d8d8"/></svg><div class="t" style="left:198.5px;width:600px;text-align:right;top:319.34px;font-size:12px;line-height:12px;color:#8f8f8f;font-weight:normal;letter-spacing:-0.65px;">Material Only WO</div><div class="r" style="left:804px;top:313px;width:64px;height:21px;background:#f2f2f2;border:1px solid #b5b5b5;box-sizing:border-box;"></div><div class="t" style="left:198.5px;width:600px;text-align:right;top:347.34px;font-size:12px;line-height:12px;color:#8f8f8f;font-weight:normal;letter-spacing:-0.65px;">Labor Only WO</div><div class="r" style="left:804px;top:341px;width:64px;height:21px;background:#f2f2f2;border:1px solid #b5b5b5;box-sizing:border-box;"></div><div class="r" style="left:932px;top:259px;width:214px;height:22px;background:#f8f8f8;border:1px solid #e6e6e6;box-sizing:border-box;border-radius:4px;"></div><svg class="r" style="left:955px;top:261px;" width="18" height="18" viewBox="0 0 18 18"><path d="M7.3,9.7 L10.7,6.3 L13.9,9.4 L10,12.7 Z" fill="#7a7a7a"/><path d="M10.7,6.3 L12.5,4.5 L15.5,7.5 L13.9,9.4 Z" fill="#a8a8a8"/><path d="M11.5,5 L15.5,1" stroke="#7a7a7a" stroke-width="1" stroke-dasharray="1,0.8"/><path d="M1.5,16.5 Q1,12 4.5,11.5 L6,11 L7.5,13.5 L9.5,16.5 Z" fill="none" stroke="#7a7a7a" stroke-width="1.4"/><path d="M2,9 Q3,7.5 5,8" fill="none" stroke="#7a7a7a" stroke-width="1.3"/><circle cx="4.5" cy="3.5" r="0.7" fill="#777"/><circle cx="5.5" cy="5.5" r="0.7" fill="#777"/><circle cx="10.5" cy="14.5" r="0.7" fill="#777"/><circle cx="12.5" cy="15.5" r="0.7" fill="#777"/></svg><div class="t" style="left:976.5px;top:264.34px;font-size:12px;line-height:12px;color:#8f8f8f;font-weight:normal;letter-spacing:-0.65px;"><u>R</u>emove inventory reservations</div><div class="r" style="left:932px;top:289px;width:214px;height:22px;background:#f8f8f8;border:1px solid #e6e6e6;box-sizing:border-box;border-radius:4px;"></div><svg class="r" style="left:985px;top:292px;" width="18" height="16" viewBox="0 0 18 16"><path d="M1,10 L8,5 H17 L10,10 Z" fill="none" stroke="#6a6a6a" stroke-width="1.2"/><path d="M1,10 V14 H10 V10 M10,14 L17,9 V5" fill="none" stroke="#6a6a6a" stroke-width="1.2"/><path d="M5,7 L12,2 H17 V5" fill="none" stroke="#6a6a6a" stroke-width="1"/></svg><div class="t" style="left:1006px;top:294.34px;font-size:12px;line-height:12px;color:#8f8f8f;font-weight:normal;letter-spacing:-0.65px;">Job <u>C</u>ustom Fields</div><div class="r" style="left:895px;top:325px;width:119px;height:25px;background:#ffffff;border:1px solid #a7a7a7;box-sizing:border-box;"></div><div class="t" style="left:904px;top:330.30px;font-size:15px;line-height:15px;color:#3c3c3c;font-weight:bold;">$</div><div class="t" style="left:924.5px;top:331.34px;font-size:12px;line-height:12px;color:#8f8f8f;font-weight:normal;letter-spacing:-0.65px;">Prevailing <u>W</u>ages</div><div class="r" style="left:1030px;top:326px;width:116px;height:22px;background:#f8f8f8;border:1px solid #e6e6e6;box-sizing:border-box;border-radius:4px;"></div><svg class="r" style="left:1034px;top:329px;" width="18" height="16" viewBox="0 0 18 16"><circle cx="3" cy="4" r="2.2" fill="none" stroke="#777"/><circle cx="7" cy="4" r="2.2" fill="none" stroke="#777"/><path d="M15,1 V9 Q15,14 9,15 H3 L7,12" fill="none" stroke="#777" stroke-width="1"/><path d="M9,7 L11,9" stroke="#777"/></svg><div class="t" style="left:1056px;top:331.34px;font-size:12px;line-height:12px;color:#8f8f8f;font-weight:normal;letter-spacing:-0.65px;"><u>N</u>otes/Reminders</div><div class="r" style="left:933px;top:364px;width:16px;height:16px;background:#f2f2f2;border:1px solid #b9b9b9;box-sizing:border-box;"></div><div class="t" style="left:953.5px;top:367.34px;font-size:12px;line-height:12px;color:#8f8f8f;font-weight:normal;letter-spacing:-0.65px;">Indirect Job</div><div class="r" style="left:1041px;top:363px;width:106px;height:86px;background:#f2f2f2;border:1px solid #a8a8a8;box-sizing:border-box;"></div><div class="r" style="left:1042px;top:364px;width:104px;height:26px;background:#dcdcdc;"></div><div class="t" style="left:1051px;top:371.34px;font-size:12px;line-height:12px;color:#454545;font-weight:bold;letter-spacing:0px;">Contact</div><div class="r" style="left:1051px;top:393px;width:16px;height:16px;border-radius:50%;background:#acacac;"></div><div class="t" style="left:1072px;top:394.84px;font-size:12px;line-height:12px;color:#9a9a9a;font-weight:normal;letter-spacing:-0.2px;">Bill To List</div><div class="r" style="left:1051px;top:410px;width:16px;height:16px;border-radius:50%;background:#acacac;"></div><div class="t" style="left:1072px;top:411.84px;font-size:12px;line-height:12px;color:#9a9a9a;font-weight:normal;letter-spacing:-0.2px;">Ship To List</div><div class="r" style="left:1051px;top:427px;width:16px;height:16px;border-radius:50%;background:#acacac;"></div><div class="t" style="left:1072px;top:428.84px;font-size:12px;line-height:12px;color:#9a9a9a;font-weight:normal;letter-spacing:-0.2px;">User Entered</div><div class="r" style="left:883px;top:397px;width:116px;height:20px;background:#f8f8f8;border:1px solid #e6e6e6;box-sizing:border-box;border-radius:4px;"></div><svg class="r" style="left:890px;top:398px;" width="17" height="17" viewBox="0 0 17 17"><path d="M0.5,5.5 H15 M4.5,1 V8 M12.5,1 V5 M4,0.5 H7 M12,0.5 H14.5 M3,14.5 H15.5 V5.5 M6,8.5 V10 M3.5,11 H9 M5,11 V14 M7.5,11 V14" fill="none" stroke="#7a7a7a" stroke-width="1"/><path d="M12,5.5 L15.5,5.5 L15.5,14.5 Z" fill="#8a8a8a"/><rect x="3" y="4.5" width="2.5" height="2.5" fill="#7a7a7a"/></svg><div class="t" style="left:910px;top:400.84px;font-size:12px;line-height:12px;color:#8f8f8f;font-weight:normal;letter-spacing:-0.65px;"><u>B</u>ill To Address</div><div class="r" style="left:883px;top:425px;width:116px;height:20px;background:#f8f8f8;border:1px solid #e6e6e6;box-sizing:border-box;border-radius:4px;"></div><svg class="r" style="left:890px;top:426px;" width="17" height="17" viewBox="0 0 17 17"><path d="M0.5,5.5 H15 M4.5,1 V8 M12.5,1 V5 M4,0.5 H7 M12,0.5 H14.5 M3,14.5 H15.5 V5.5 M6,8.5 V10 M3.5,11 H9 M5,11 V14 M7.5,11 V14" fill="none" stroke="#7a7a7a" stroke-width="1"/><path d="M12,5.5 L15.5,5.5 L15.5,14.5 Z" fill="#8a8a8a"/><rect x="3" y="4.5" width="2.5" height="2.5" fill="#7a7a7a"/></svg><div class="t" style="left:910px;top:428.84px;font-size:12px;line-height:12px;color:#8f8f8f;font-weight:normal;letter-spacing:-0.65px;"><u>S</u>hip To Address</div><div class="r" style="left:756px;top:458px;width:356px;height:448px;background:#f2f2f2;border:1px solid #a8a8a8;box-sizing:border-box;"></div><div class="r" style="left:757px;top:459px;width:354px;height:24px;background:#dcdcdc;"></div><div class="t" style="left:767px;top:464.92px;font-size:12.5px;line-height:12.5px;color:#454545;font-weight:bold;letter-spacing:-0.1px;">Tracking</div><div class="t" style="left:277px;width:600px;text-align:right;top:495.84px;font-size:12px;line-height:12px;color:#9a9a9a;font-weight:normal;letter-spacing:-0.2px;">% Complete</div><div class="r" style="left:888px;top:491px;width:57px;height:19px;background:#f2f2f2;border:1px solid #b5b5b5;box-sizing:border-box;"></div><div class="t" style="left:891px;top:494.84px;font-size:12px;line-height:12px;color:#a0a0a0;font-weight:normal;">0</div><svg class="r" style="left:933px;top:494px;" width="7" height="14" viewBox="0 0 7 14"><path d="M0.5,4 L3.5,1 L6.5,4 Z M0.5,10 L3.5,13 L6.5,10 Z" fill="#c8c8c8"/></svg><div class="r" style="left:989px;top:492px;width:16px;height:16px;background:#f2f2f2;border:1px solid #b9b9b9;box-sizing:border-box;"></div><div class="t" style="left:1009.5px;top:494.84px;font-size:12px;line-height:12px;color:#8f8f8f;font-weight:normal;letter-spacing:-0.65px;">Generate Alerts</div><div class="t" style="left:277px;width:600px;text-align:right;top:522.84px;font-size:12px;line-height:12px;color:#9a9a9a;font-weight:normal;letter-spacing:-0.2px;">% of Labor Budget</div><div class="r" style="left:887px;top:520px;width:57px;height:19px;background:#f2f2f2;border:1px solid #b5b5b5;box-sizing:border-box;"></div><div class="t" style="left:890px;top:523.84px;font-size:12px;line-height:12px;color:#a0a0a0;font-weight:normal;">0</div><svg class="r" style="left:932px;top:523px;" width="7" height="14" viewBox="0 0 7 14"><path d="M0.5,4 L3.5,1 L6.5,4 Z M0.5,10 L3.5,13 L6.5,10 Z" fill="#c8c8c8"/></svg><div class="t" style="left:277px;width:600px;text-align:right;top:550.84px;font-size:12px;line-height:12px;color:#9a9a9a;font-weight:normal;letter-spacing:-0.2px;">% of WO's Finished</div><div class="r" style="left:887px;top:547px;width:56px;height:21px;background:#f2f2f2;border:1px solid #b5b5b5;box-sizing:border-box;"></div><div class="t" style="left:974.5px;top:539.34px;font-size:12px;line-height:12px;color:#8f8f8f;font-weight:normal;letter-spacing:-0.65px;">Progress Billing Day</div><div class="r" style="left:974px;top:553px;width:110px;height:21px;background:#f2f2f2;border:1px solid #b5b5b5;box-sizing:border-box;"></div><svg class="r" style="left:1070px;top:561px;" width="7" height="4" viewBox="0 0 7 4"><path d="M0.5,0.5 H6.5 L3.5,3.5 Z" fill="#d8d8d8"/></svg><div class="t" style="left:277px;width:600px;text-align:right;top:578.84px;font-size:12px;line-height:12px;color:#9a9a9a;font-weight:normal;letter-spacing:-0.2px;">% Billed</div><div class="r" style="left:887px;top:575px;width:56px;height:21px;background:#f2f2f2;border:1px solid #b5b5b5;box-sizing:border-box;"></div><div class="t" style="left:278.5px;width:600px;text-align:right;top:605.84px;font-size:12px;line-height:12px;color:#9a9a9a;font-weight:normal;letter-spacing:-0.2px;">Last Reg Invoice No.</div><div class="r" style="left:887px;top:602px;width:56px;height:21px;background:#f2f2f2;border:1px solid #b5b5b5;box-sizing:border-box;"></div><div class="t" style="left:399.0px;width:600px;text-align:right;top:605.84px;font-size:12px;line-height:12px;color:#8f8f8f;font-weight:normal;letter-spacing:-0.65px;">Reg Date</div><div class="r" style="left:1006px;top:603px;width:78px;height:21px;background:#f2f2f2;border:1px solid #b5b5b5;box-sizing:border-box;"></div><div class="t" style="left:278.5px;width:600px;text-align:right;top:631.84px;font-size:12px;line-height:12px;color:#9a9a9a;font-weight:normal;letter-spacing:-0.2px;">Last Prog Invoice No.</div><div class="r" style="left:887px;top:628px;width:56px;height:21px;background:#f2f2f2;border:1px solid #b5b5b5;box-sizing:border-box;"></div><div class="t" style="left:399.0px;width:600px;text-align:right;top:631.84px;font-size:12px;line-height:12px;color:#8f8f8f;font-weight:normal;letter-spacing:-0.65px;">Prog Date</div><div class="r" style="left:1006px;top:630px;width:78px;height:20px;background:#f2f2f2;border:1px solid #b5b5b5;box-sizing:border-box;"></div><div class="t" style="left:277px;width:600px;text-align:right;top:674.84px;font-size:12px;line-height:12px;color:#9a9a9a;font-weight:normal;letter-spacing:-0.2px;">Materials Due Dt</div><div class="r" style="left:886px;top:667px;width:117px;height:19px;background:#f2f2f2;border:1px solid #b5b5b5;box-sizing:border-box;"></div><svg class="r" style="left:989px;top:674px;" width="7" height="4" viewBox="0 0 7 4"><path d="M0.5,0.5 H6.5 L3.5,3.5 Z" fill="#d8d8d8"/></svg><div class="t" style="left:277px;width:600px;text-align:right;top:700.84px;font-size:12px;line-height:12px;color:#9a9a9a;font-weight:normal;letter-spacing:-0.2px;">Don't Sched Before Dt</div><div class="r" style="left:886px;top:694px;width:117px;height:19px;background:#f2f2f2;border:1px solid #b5b5b5;box-sizing:border-box;"></div><svg class="r" style="left:989px;top:701px;" width="7" height="4" viewBox="0 0 7 4"><path d="M0.5,0.5 H6.5 L3.5,3.5 Z" fill="#d8d8d8"/></svg><div class="t" style="left:277px;width:600px;text-align:right;top:726.84px;font-size:12px;line-height:12px;color:#9a9a9a;font-weight:normal;letter-spacing:-0.2px;">Target Finish Dt</div><div class="r" style="left:886px;top:721px;width:117px;height:19px;background:#f2f2f2;border:1px solid #b5b5b5;box-sizing:border-box;"></div><svg class="r" style="left:989px;top:728px;" width="7" height="4" viewBox="0 0 7 4"><path d="M0.5,0.5 H6.5 L3.5,3.5 Z" fill="#d8d8d8"/></svg><div class="t" style="left:277px;width:600px;text-align:right;top:753.84px;font-size:12px;line-height:12px;color:#9a9a9a;font-weight:normal;letter-spacing:-0.2px;">Ship Date</div><div class="r" style="left:886px;top:747px;width:117px;height:19px;background:#f2f2f2;border:1px solid #b5b5b5;box-sizing:border-box;"></div><svg class="r" style="left:989px;top:754px;" width="7" height="4" viewBox="0 0 7 4"><path d="M0.5,0.5 H6.5 L3.5,3.5 Z" fill="#d8d8d8"/></svg><div class="t" style="left:277px;width:600px;text-align:right;top:781.84px;font-size:12px;line-height:12px;color:#9a9a9a;font-weight:normal;letter-spacing:-0.2px;">Scheduled Start</div><div class="r" style="left:886px;top:775px;width:117px;height:19px;background:#f2f2f2;border:1px solid #b5b5b5;box-sizing:border-box;"></div><svg class="r" style="left:989px;top:782px;" width="7" height="4" viewBox="0 0 7 4"><path d="M0.5,0.5 H6.5 L3.5,3.5 Z" fill="#d8d8d8"/></svg><div class="t" style="left:277px;width:600px;text-align:right;top:808.84px;font-size:12px;line-height:12px;color:#9a9a9a;font-weight:normal;letter-spacing:-0.2px;">Scheduled Finish</div><div class="r" style="left:886px;top:802px;width:117px;height:19px;background:#f2f2f2;border:1px solid #b5b5b5;box-sizing:border-box;"></div><svg class="r" style="left:989px;top:809px;" width="7" height="4" viewBox="0 0 7 4"><path d="M0.5,0.5 H6.5 L3.5,3.5 Z" fill="#d8d8d8"/></svg><div class="t" style="left:277px;width:600px;text-align:right;top:836.84px;font-size:12px;line-height:12px;color:#9a9a9a;font-weight:normal;letter-spacing:-0.2px;">Actual Start</div><div class="r" style="left:886px;top:830px;width:117px;height:19px;background:#f2f2f2;border:1px solid #b5b5b5;box-sizing:border-box;"></div><svg class="r" style="left:989px;top:837px;" width="7" height="4" viewBox="0 0 7 4"><path d="M0.5,0.5 H6.5 L3.5,3.5 Z" fill="#d8d8d8"/></svg><div class="t" style="left:277px;width:600px;text-align:right;top:863.84px;font-size:12px;line-height:12px;color:#9a9a9a;font-weight:normal;letter-spacing:-0.2px;">Actual Finish</div><div class="r" style="left:886px;top:857px;width:117px;height:19px;background:#f2f2f2;border:1px solid #b5b5b5;box-sizing:border-box;"></div><svg class="r" style="left:989px;top:864px;" width="7" height="4" viewBox="0 0 7 4"><path d="M0.5,0.5 H6.5 L3.5,3.5 Z" fill="#d8d8d8"/></svg><div class="r" style="left:1017px;top:748px;width:16px;height:16px;background:#f2f2f2;border:1px solid #b9b9b9;box-sizing:border-box;"></div><div class="t" style="left:1037px;top:751.34px;font-size:12px;line-height:12px;color:#8f8f8f;font-weight:normal;letter-spacing:-0.65px;">Not Firm</div><div class="r" style="left:1017px;top:852px;width:40px;height:25px;background:#ffffff;border:1px solid #b0b0b0;box-sizing:border-box;"></div><div class="t" style="left:737px;width:600px;text-align:center;top:859.34px;font-size:12px;line-height:12px;color:#8f8f8f;font-weight:normal;letter-spacing:-0.65px;">Edit</div><svg class="r" style="left:0;top:0" width="1749" height="1058" viewBox="0 0 1749 1058"><line x1="336" y1="51" x2="515.8" y2="249.7" stroke="#0a84ff" stroke-width="1.3"/><line x1="438" y1="49.5" x2="614.9" y2="241.5" stroke="#0a84ff" stroke-width="1.3"/><line x1="534.8" y1="50.7" x2="729.3" y2="249.3" stroke="#0a84ff" stroke-width="1.3"/><line x1="620" y1="48.6" x2="817.5" y2="247.5" stroke="#0a84ff" stroke-width="1.3"/><line x1="689.7" y1="48.6" x2="885.7" y2="249.3" stroke="#0a84ff" stroke-width="1.3"/><line x1="803" y1="48.6" x2="999.5" y2="247.5" stroke="#0a84ff" stroke-width="1.3"/><line x1="1100" y1="46.8" x2="1099.5" y2="249.5" stroke="#0a84ff" stroke-width="1.3"/><line x1="1320.3" y1="48.3" x2="1325.3" y2="249.5" stroke="#0a84ff" stroke-width="1.3"/><line x1="1528" y1="50" x2="1527.4" y2="249.7" stroke="#0a84ff" stroke-width="1.3"/><line x1="1626" y1="49.2" x2="1627.4" y2="251.8" stroke="#0a84ff" stroke-width="1.3"/></svg><div class="t" style="left:35.60000000000002px;width:600px;text-align:center;top:18.00px;font-size:13px;line-height:13px;color:#111;font-weight:normal;">Job Details</div><div class="r" style="left:322.0px;top:37.0px;width:28px;height:28px;border-radius:9px;background:#0a84ff;box-shadow:2px 2px 3px rgba(0,0,0,0.45);"></div><div class="t" style="left:36px;width:600px;text-align:center;top:43.95px;font-size:14px;line-height:14px;color:#fff;font-weight:bold;">1</div><div class="t" style="left:138.3px;width:600px;text-align:center;top:17.60px;font-size:13px;line-height:13px;color:#111;font-weight:normal;">Tracking</div><div class="r" style="left:424.0px;top:35.5px;width:28px;height:28px;border-radius:9px;background:#0a84ff;box-shadow:2px 2px 3px rgba(0,0,0,0.45);"></div><div class="t" style="left:138px;width:600px;text-align:center;top:42.45px;font-size:14px;line-height:14px;color:#fff;font-weight:bold;">2</div><div class="t" style="left:235px;width:600px;text-align:center;top:18.10px;font-size:13px;line-height:13px;color:#111;font-weight:normal;">Transmittals</div><div class="r" style="left:520.8px;top:36.7px;width:28px;height:28px;border-radius:9px;background:#0a84ff;box-shadow:2px 2px 3px rgba(0,0,0,0.45);"></div><div class="t" style="left:234.79999999999995px;width:600px;text-align:center;top:43.65px;font-size:14px;line-height:14px;color:#fff;font-weight:bold;">3</div><div class="t" style="left:320px;width:600px;text-align:center;top:16.20px;font-size:13px;line-height:13px;color:#111;font-weight:normal;">RFI's</div><div class="r" style="left:606.0px;top:34.6px;width:28px;height:28px;border-radius:9px;background:#0a84ff;box-shadow:2px 2px 3px rgba(0,0,0,0.45);"></div><div class="t" style="left:320px;width:600px;text-align:center;top:41.55px;font-size:14px;line-height:14px;color:#fff;font-weight:bold;">4</div><div class="t" style="left:389.4px;width:600px;text-align:center;top:16.20px;font-size:13px;line-height:13px;color:#111;font-weight:normal;">Address</div><div class="r" style="left:675.7px;top:34.6px;width:28px;height:28px;border-radius:9px;background:#0a84ff;box-shadow:2px 2px 3px rgba(0,0,0,0.45);"></div><div class="t" style="left:389.70000000000005px;width:600px;text-align:center;top:41.55px;font-size:14px;line-height:14px;color:#fff;font-weight:bold;">5</div><div class="t" style="left:502.5px;width:600px;text-align:center;top:16.20px;font-size:13px;line-height:13px;color:#111;font-weight:normal;">Job Costs</div><div class="r" style="left:789.0px;top:34.6px;width:28px;height:28px;border-radius:9px;background:#0a84ff;box-shadow:2px 2px 3px rgba(0,0,0,0.45);"></div><div class="t" style="left:503px;width:600px;text-align:center;top:41.55px;font-size:14px;line-height:14px;color:#fff;font-weight:bold;">6</div><div class="t" style="left:799.8px;width:600px;text-align:center;top:14.00px;font-size:13px;line-height:13px;color:#111;font-weight:normal;">Sub Contractors</div><div class="r" style="left:1086.0px;top:32.8px;width:28px;height:28px;border-radius:9px;background:#0a84ff;box-shadow:2px 2px 3px rgba(0,0,0,0.45);"></div><div class="t" style="left:800px;width:600px;text-align:center;top:39.75px;font-size:14px;line-height:14px;color:#fff;font-weight:bold;">7</div><div class="t" style="left:1019.8px;width:600px;text-align:center;top:15.40px;font-size:13px;line-height:13px;color:#111;font-weight:normal;">Progress Billing / Schedule of Values</div><div class="r" style="left:1306.3px;top:34.3px;width:28px;height:28px;border-radius:9px;background:#0a84ff;box-shadow:2px 2px 3px rgba(0,0,0,0.45);"></div><div class="t" style="left:1020.3px;width:600px;text-align:center;top:41.25px;font-size:14px;line-height:14px;color:#fff;font-weight:bold;">8</div><div class="t" style="left:1227.5px;width:600px;text-align:center;top:17.30px;font-size:13px;line-height:13px;color:#111;font-weight:normal;">Notes</div><div class="r" style="left:1514.0px;top:36.0px;width:28px;height:28px;border-radius:9px;background:#0a84ff;box-shadow:2px 2px 3px rgba(0,0,0,0.45);"></div><div class="t" style="left:1228px;width:600px;text-align:center;top:42.95px;font-size:14px;line-height:14px;color:#fff;font-weight:bold;">9</div><div class="t" style="left:1325.6px;width:600px;text-align:center;top:16.20px;font-size:13px;line-height:13px;color:#111;font-weight:normal;">Documents</div><div class="r" style="left:1612.0px;top:35.2px;width:28px;height:28px;border-radius:9px;background:#0a84ff;box-shadow:2px 2px 3px rgba(0,0,0,0.45);"></div><div class="t" style="left:1326px;width:600px;text-align:center;top:42.15px;font-size:14px;line-height:14px;color:#fff;font-weight:bold;">10</div>
</body></html>
